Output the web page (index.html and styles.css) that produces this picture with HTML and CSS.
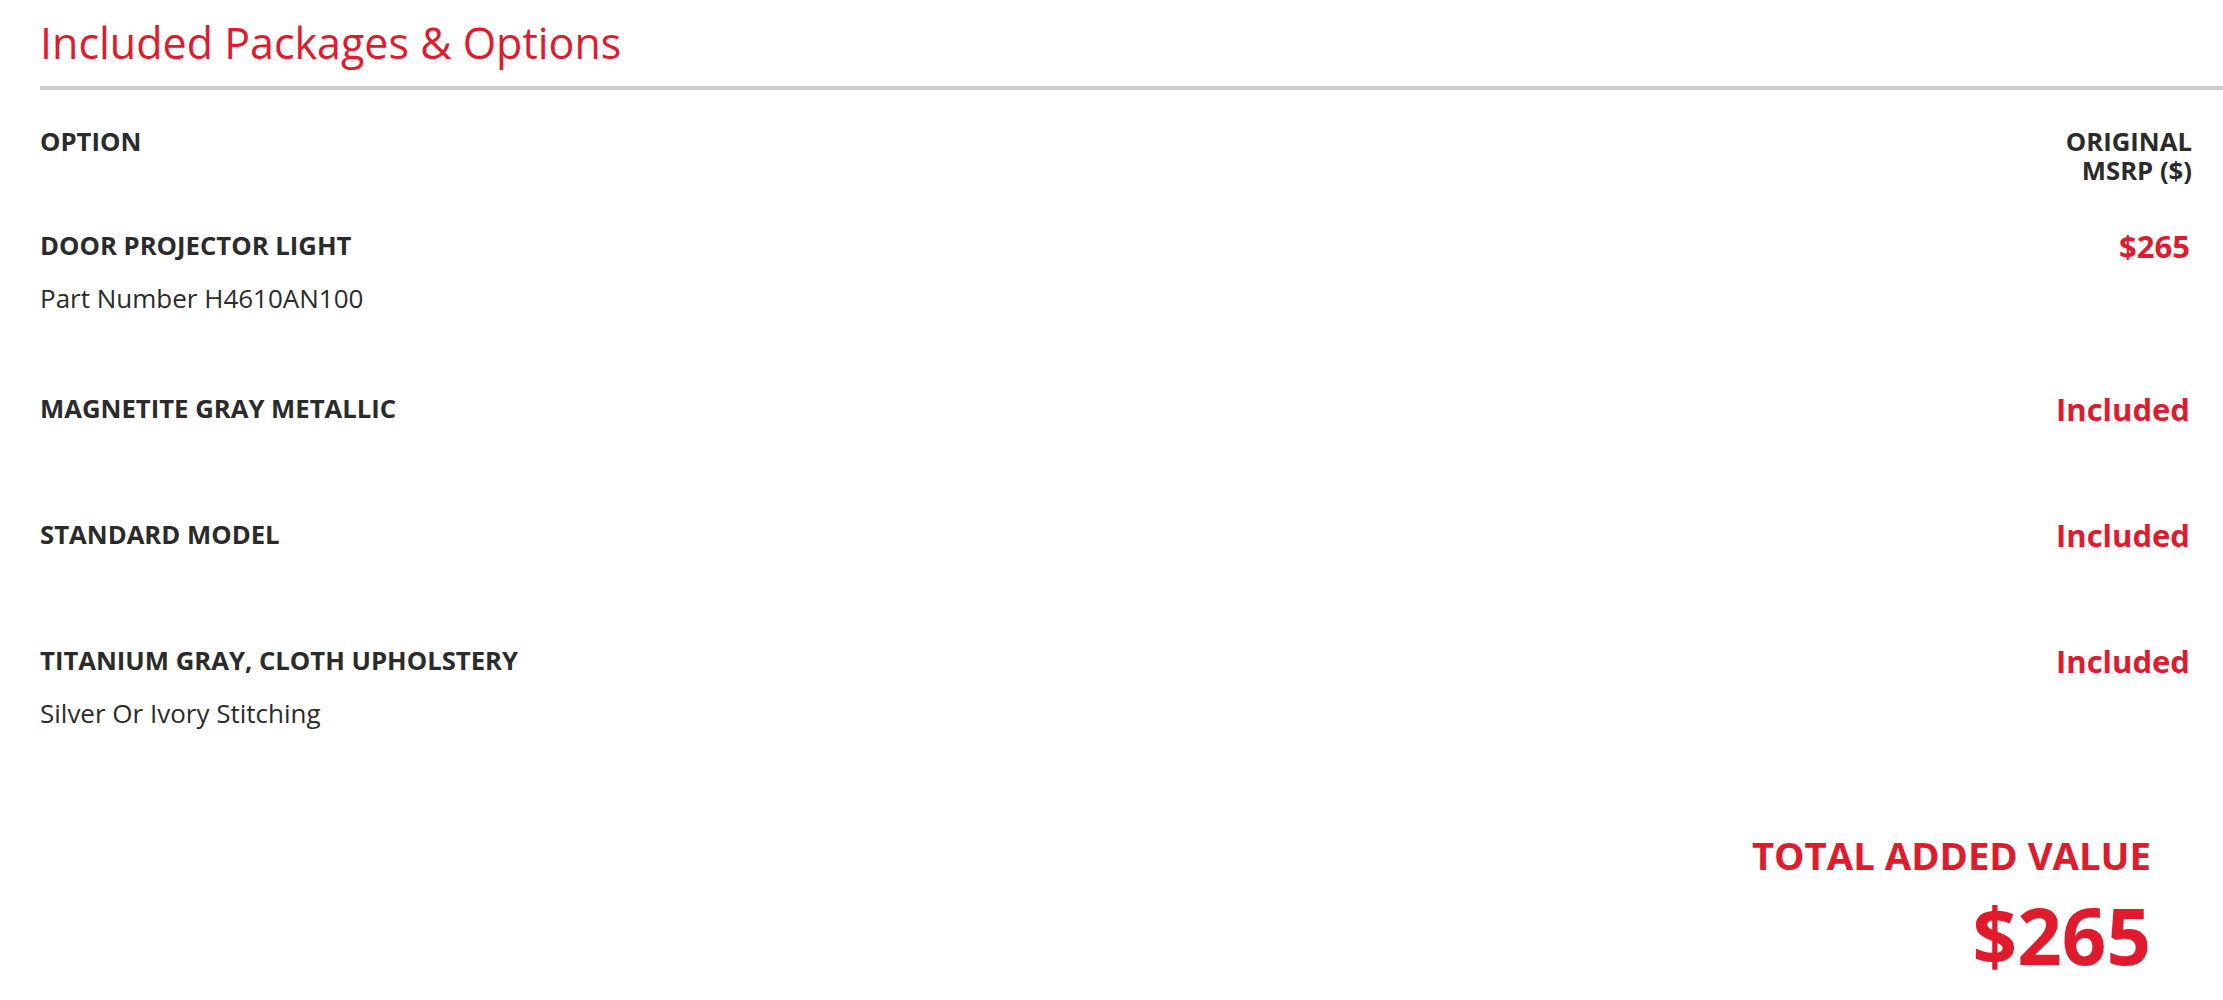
FILE: index.html
```html
<!DOCTYPE html>
<html lang="en">
<head>
<meta charset="utf-8">
<title>Included Packages &amp; Options</title>
<link rel="stylesheet" href="styles.css">
</head>
<body>
<section class="options">
  <h2 class="options__title">Included Packages &amp; Options</h2>
  <div class="options__table">
    <div class="options__head">
      <div class="head__label">OPTION</div>
      <div class="head__price">
        <div class="head__line">ORIGINAL</div>
        <div class="head__line">MSRP ($)</div>
      </div>
    </div>
    <div class="row">
      <div class="row__info">
        <div class="row__name">DOOR PROJECTOR LIGHT</div>
        <div class="row__sub">Part Number H4610AN100</div>
      </div>
      <div class="row__price">$265</div>
    </div>
    <div class="row">
      <div class="row__info">
        <div class="row__name">MAGNETITE GRAY METALLIC</div>
      </div>
      <div class="row__price">Included</div>
    </div>
    <div class="row">
      <div class="row__info">
        <div class="row__name">STANDARD MODEL</div>
      </div>
      <div class="row__price">Included</div>
    </div>
    <div class="row">
      <div class="row__info">
        <div class="row__name">TITANIUM GRAY, CLOTH UPHOLSTERY</div>
        <div class="row__sub">Silver Or Ivory Stitching</div>
      </div>
      <div class="row__price">Included</div>
    </div>
    <div class="total">
      <div class="total__label">TOTAL ADDED VALUE</div>
      <div class="total__value">$265</div>
    </div>
  </div>
</section>
</body>
</html>
```
FILE: styles.css
```css
html, body {
  margin: 0;
  padding: 0;
  background: #ffffff;
}

body {
  font-family: "Open Sans", "Liberation Sans", sans-serif;
  color: #2b2b2b;
}

.options {
  padding: 18px 0 0 40px;
}

.options__title {
  margin: 0;
  padding: 0 0 18px 0;
  font-size: 43px;
  line-height: 50px;
  font-weight: 400;
  color: #e01b2d;
  border-bottom: 4px solid #cdcdcd;
}

.options__table {
  display: flex;
  flex-direction: column;
  padding: 37px 31px 0 0;
}

.options__head {
  display: flex;
  justify-content: space-between;
  font-size: 25.7px;
  line-height: 29px;
  font-weight: 700;
  margin-bottom: 46px;
}

.head__price {
  display: flex;
  flex-direction: column;
  align-items: flex-end;
}

.head__line {
  height: 29px;
}

.row {
  display: flex;
  justify-content: space-between;
  align-items: flex-start;
  min-height: 45px;
  padding-bottom: 81px;
}

.row__name {
  font-size: 25.7px;
  line-height: 30px;
  font-weight: 700;
}

.row__sub {
  margin-top: 22px;
  font-size: 26px;
  line-height: 30px;
  font-weight: 400;
}

.row__price {
  margin-right: 2px;
  font-size: 31px;
  line-height: 30px;
  font-weight: 700;
  color: #e01b2d;
  text-align: right;
}

.total {
  display: flex;
  flex-direction: column;
  align-items: flex-end;
  padding-top: 22px;
  margin-right: 41px;
  color: #e01b2d;
  font-weight: 700;
}

.total__label {
  font-size: 38.3px;
  line-height: 48px;
}

.total__value {
  margin-top: 13px;
  font-size: 78px;
  line-height: 86px;
}
```
